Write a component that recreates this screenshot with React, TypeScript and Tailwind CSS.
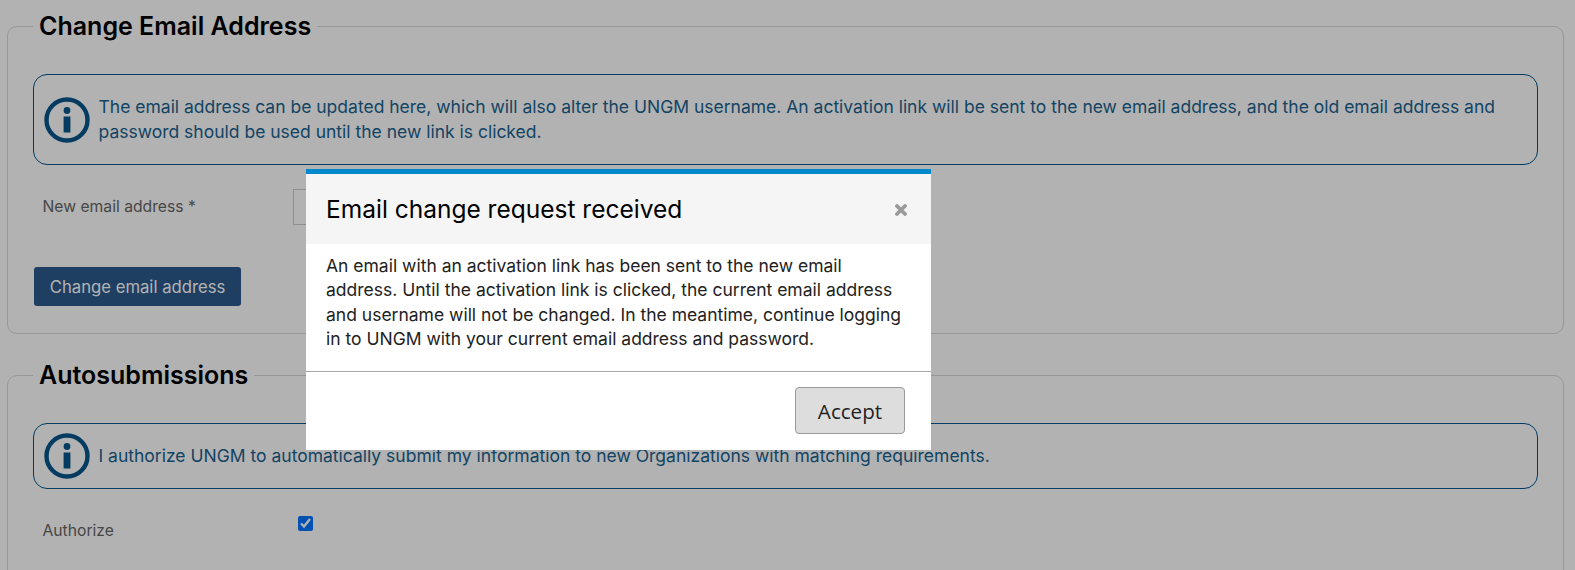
function InfoIcon() {
  return (
    <svg width="46" height="46" viewBox="0 0 46 46" className="shrink-0">
      <circle cx="23" cy="23" r="20.5" fill="none" stroke="#07568c" strokeWidth="4.4" />
      <circle cx="23" cy="13.5" r="3.4" fill="#07568c" />
      <rect x="19.6" y="19.5" width="6.8" height="16" fill="#07568c" />
    </svg>
  );
}

function CloseIcon() {
  return (
    <svg width="12" height="12" viewBox="0 0 12 12" className="shrink-0">
      <path d="M2 2 10 10M10 2 2 10" stroke="#999" strokeWidth="3.8" strokeLinecap="round" fill="none" />
    </svg>
  );
}

function InfoBox({ className, children }: { className: string; children: React.ReactNode }) {
  return (
    <div className={`flex items-center gap-[8.5px] mt-[33px] mx-[25px] pl-[10px] pr-4 border border-[#00558f] rounded-[14px] text-[#1a628f] text-[17.5px] leading-[25px] ${className}`}>
      <InfoIcon />
      <p className="mb-[2px]">{children}</p>
    </div>
  );
}

function Section({ title, className, children }: { title: string; className?: string; children: React.ReactNode }) {
  return (
    <fieldset className={`border border-[#d9d9d9] rounded-[10px] ${className ?? ''}`}>
      <legend className="ml-[25px] px-[6px] text-[25px] leading-[29px] font-semibold text-black">{title}</legend>
      {children}
    </fieldset>
  );
}

export default function App() {
  return (
    <div className="relative h-[570px] overflow-hidden bg-white font-['Inter',sans-serif]">
      <main className="pt-3 pl-[7px] pr-[11px]">
        <Section title="Change Email Address" className="h-[322px]">
          <InfoBox className="pt-[19px] pb-[18px]">
            The email address can be updated here, which will also alter the UNGM username. An activation link will be sent to the new email address, and the old email address and password should be used until the new link is clicked.
          </InfoBox>
          <div className="flex items-center mt-[24px] ml-[34.5px]">
            <label className="w-[250.5px] text-[15.7px] text-[#666]">New email address *</label>
            <input className="w-[400px] h-[36px] border border-[#ccc] bg-white" />
          </div>
          <button className="block mt-[42px] ml-[26px] pt-[2px] w-[207px] h-[39px] rounded-[3px] bg-[#2b5a8d] text-white text-[16.7px]">
            Change email address
          </button>
        </Section>

        <Section title="Autosubmissions" className="mt-[27px] h-[260px]">
          <InfoBox className="py-[9px]">
            I authorize UNGM to automatically submit my information to new Organizations with matching requirements.
          </InfoBox>
          <div className="flex items-start mt-[27px] ml-[34.5px]">
            <label className="w-[255.5px] mt-[3px] text-[15.7px] text-[#666]">Authorize</label>
            <input type="checkbox" defaultChecked className="w-[15px] h-[15px] m-0" />
          </div>
        </Section>
      </main>

      <div className="absolute inset-0 bg-black/30 pt-[169px] pl-[306px]">
        <div className="w-[625px] h-[281px] bg-white border-t-[5px] border-[#0088cc]">
          <header className="flex items-center justify-between h-[70px] pl-[20px] pr-[24px] pt-px bg-[#f5f5f5]">
            <h2 className="text-[24.5px] text-black">Email change request received</h2>
            <CloseIcon />
          </header>
          <p className="h-[127px] pl-[20px] pr-[28px] pt-[10px] text-[17.5px] leading-[24.3px] text-[#222]">
            An email with an activation link has been sent to the new email address. Until the activation link is clicked, the current email address and username will not be changed. In the meantime, continue logging in to UNGM with your current email address and password.
          </p>
          <footer className="flex justify-end pt-[15px] pr-[26px] border-t border-[#aaa]">
            <button className="w-[110px] h-[47px] pt-px rounded-[4px] border border-[#999] bg-[#ddd] font-['Open_Sans',sans-serif] text-[20.6px] text-[#222]">
              Accept
            </button>
          </footer>
        </div>
      </div>
    </div>
  );
}
